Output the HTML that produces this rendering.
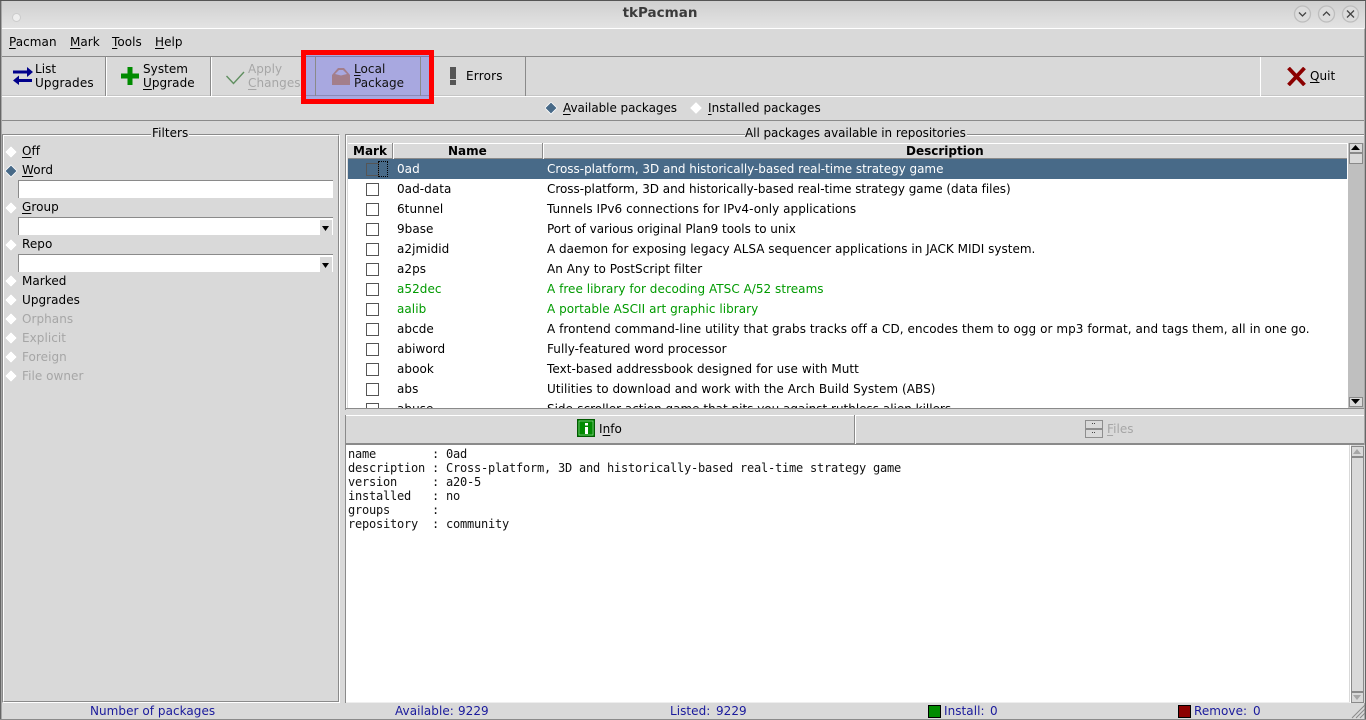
<!DOCTYPE html>
<html><head><meta charset="utf-8"><title>tkPacman</title>
<style>
html,body{margin:0;padding:0;background:#d9d9d9}
#w{position:relative;width:1366px;height:720px;overflow:hidden;background:#d9d9d9;font:12px/16px "DejaVu Sans",sans-serif;letter-spacing:.05px;color:#000}
#w div,#w span.t,#w svg{position:absolute}
.t{white-space:nowrap}
u{text-underline-offset:2px}
.n{position:absolute;left:397px;white-space:nowrap;color:#000}
.d{position:absolute;left:547px;white-space:nowrap;color:#000}
.g{color:#009a00!important}
.c{position:absolute;left:366px;width:11px;height:11px;border:1px solid #555;background:#fff}
.dis{color:#a6a6a6}
.bl{color:#1a1a9c}
.l{background:#8a8a8a}
.wl{background:#fff}
.h{font-weight:bold;letter-spacing:0}
</style></head><body><div id="w">
<!-- title bar -->
<div style="left:0;top:0;width:1366px;height:28px;background:linear-gradient(#cfcfcf,#e3e3e3);border-radius:6px 6px 0 0"></div>
<div style="left:0;top:0;width:1366px;height:1px;background:#555"></div>
<div style="left:12px;top:13px;width:7px;height:7px;border-radius:50%;background:#eee;border:1px solid #ccc"></div>
<span class="t" style="left:0;width:1320px;text-align:center;top:5px;font-weight:bold;font-size:13.5px;color:#3a3a3a;letter-spacing:0">tkPacman</span>
<svg style="left:1290px;top:2px" width="76" height="24" fill="none" stroke="#444" stroke-width="1.3">
<circle cx="12.500" cy="12" r="8" fill="#dcdcdc" stroke="#bdbdbd"/><path d="M9 10.500l3.500 3.500 3.500-3.500"/>
<circle cx="36.500" cy="12" r="8" fill="#dcdcdc" stroke="#bdbdbd"/><path d="M33 13.500l3.500-3.500 3.500 3.500"/>
<circle cx="60.500" cy="12" r="8" fill="#dcdcdc" stroke="#bdbdbd"/><path d="M57 8.500l7 7M64 8.500l-7 7"/></svg>
<div class="wl" style="left:2px;top:28px;width:1362px;height:1px"></div>
<!-- window borders -->
<div style="left:0;top:1px;width:1px;height:719px;background:#666"></div>
<div style="left:1px;top:1px;width:1px;height:719px;background:#a8a8a8"></div>
<div style="left:1365px;top:1px;width:1px;height:719px;background:#666"></div>
<div style="left:1364px;top:29px;width:1px;height:691px;background:#a8a8a8"></div>
<!-- menu -->
<span class="t" style="left:9px;top:34px"><u>P</u>acman</span>
<span class="t" style="left:70px;top:34px"><u>M</u>ark</span>
<span class="t" style="left:112px;top:34px"><u>T</u>ools</span>
<span class="t" style="left:155px;top:34px"><u>H</u>elp</span>
<div class="l" style="left:2px;top:56px;width:1362px;height:1px"></div>
<div class="wl" style="left:2px;top:96px;width:1362px;height:1px"></div>
<div class="l" style="left:2px;top:95px;width:1362px;height:1px;opacity:.25"></div>
<!-- toolbar separators -->
<div class="l" style="left:105px;top:57px;width:1px;height:39px"></div><div class="wl" style="left:106px;top:57px;width:1px;height:39px"></div>
<div class="l" style="left:210px;top:57px;width:1px;height:39px"></div><div class="wl" style="left:211px;top:57px;width:1px;height:39px"></div>
<div class="l" style="left:525px;top:57px;width:1px;height:39px"></div>
<div class="wl" style="left:1260px;top:57px;width:1px;height:39px"></div>
<!-- List upgrades -->
<svg style="left:12px;top:64px" width="21" height="23" fill="#00008b"><path d="M1 6.500h14V3l6 5-6 5V9.500H1zM20 15H7v-3.500L1 16.500 7 21v-3h13z"/></svg>
<span class="t" style="left:35px;top:61px">List</span><span class="t" style="left:35px;top:75px;letter-spacing:.15px">Upgrades</span>
<!-- System -->
<svg style="left:121px;top:67px" width="18" height="18" fill="#008b00"><path d="M6.500 0h5v6.500H18v5h-6.500V18h-5v-6.500H0v-5h6.500z"/></svg>
<span class="t" style="left:143px;top:61px">System</span><span class="t" style="left:143px;top:75px"><u>U</u>pgrade</span>
<!-- Apply -->
<svg style="left:226px;top:71px" width="19" height="14" fill="none" stroke="#5f8f5f" stroke-width="1.400"><path d="M0.500 5l7 7.500L18 1"/></svg>
<span class="t dis" style="left:248px;top:61px">Apply</span><span class="t dis" style="left:248px;top:75px"><u>C</u>hanges</span>
<!-- Local package highlight -->
<div style="left:301px;top:50px;width:133px;height:54px;background:#f00"></div>
<div style="left:306px;top:55px;width:123px;height:44px;background:#a8a8e0"></div>
<div style="left:306px;top:56px;width:123px;height:1px;background:#7c7ca8"></div>
<div style="left:306px;top:95px;width:123px;height:1px;background:#8a8ab8"></div>
<div class="l" style="left:315px;top:57px;width:1px;height:39px"></div>
<div class="l" style="left:420px;top:57px;width:1px;height:39px"></div>
<svg style="left:332px;top:68px" width="18" height="17"><path d="M0 7L6 0h6l6 7v10H0z" fill="#a37e8b"/><path d="M3 6L7 2h4l4 4-6 1.500z" fill="#a8a8e0"/></svg>
<span class="t" style="left:354px;top:61px;color:#111"><u>L</u>ocal</span><span class="t" style="left:354px;top:75px;color:#111">Package</span>
<!-- Errors -->
<svg style="left:450px;top:67px" width="7" height="18" fill="#555"><rect x="0" y="0" width="6" height="12"/><rect x="0" y="13" width="6" height="5"/></svg>
<span class="t" style="left:466px;top:68px;letter-spacing:.2px">Errors</span>
<!-- Quit -->
<svg style="left:1287px;top:67px" width="20" height="19" stroke="#8b0000" stroke-width="3.800" fill="none"><path d="M1.500 1l16 17M17.500 1l-16 17"/></svg>
<span class="t" style="left:1310px;top:68px"><u>Q</u>uit</span>
<!-- radio row -->
<svg style="left:545px;top:102px" width="13" height="13"><path d="M6 0l6 6-6 6-6-6z" fill="#486a88" stroke="#fff" stroke-width=".8"/></svg>
<span class="t" style="left:563px;top:100px;letter-spacing:-.06px"><u>A</u>vailable packages</span>
<svg style="left:690px;top:102px" width="13" height="13"><path d="M6 0l6 6-6 6-6-6z" fill="#fff" stroke="#ddd" stroke-width=".4"/></svg>
<span class="t" style="left:708px;top:100px"><u>I</u>nstalled packages</span>
<div class="l" style="left:2px;top:120px;width:1362px;height:1px"></div>
<!-- Filters frame -->
<div style="left:2px;top:134px;width:338px;height:569px;box-sizing:border-box;border:1px solid;border-color:#8a8a8a #fff #fff #8a8a8a"></div>
<div style="left:3px;top:135px;width:336px;height:567px;box-sizing:border-box;border:1px solid;border-color:#fff #8a8a8a #8a8a8a #fff"></div>
<span class="t" style="left:151px;top:125px;background:#d9d9d9;padding:0 1px">Filters</span>
<svg style="left:4px;top:145px" width="14" height="240" fill="#fff" stroke="#ccc" stroke-width=".4">
<path d="M7 1l6 6-6 6-6-6z"/><path d="M7 20l6 6-6 6-6-6z" fill="#486a88" stroke="#fff" stroke-width=".8"/><path d="M7 57l6 6-6 6-6-6z"/><path d="M7 94l6 6-6 6-6-6z"/><path d="M7 130l6 6-6 6-6-6z"/><path d="M7 149l6 6-6 6-6-6z"/><path d="M7 168l6 6-6 6-6-6z"/><path d="M7 187l6 6-6 6-6-6z"/><path d="M7 206l6 6-6 6-6-6z"/><path d="M7 225l6 6-6 6-6-6z"/></svg>
<span class="t" style="left:22px;top:143px"><u>O</u>ff</span>
<span class="t" style="left:22px;top:162px"><u>W</u>ord</span>
<div style="left:18px;top:180px;width:314px;height:17px;background:#fff;border-top:1px solid #8a8a8a;border-left:1px solid #8a8a8a;box-sizing:content-box"></div>
<span class="t" style="left:22px;top:199px"><u>G</u>roup</span>
<div style="left:18px;top:217px;width:314px;height:17px;background:#fff;border-top:1px solid #8a8a8a;border-left:1px solid #8a8a8a"></div>
<div style="left:320px;top:220px;width:12px;height:15px;background:#d9d9d9"></div>
<svg style="left:322px;top:226px" width="8" height="6"><path d="M0 0h7L3.500 5z"/></svg>
<span class="t" style="left:22px;top:236px">Repo</span>
<div style="left:18px;top:254px;width:314px;height:17px;background:#fff;border-top:1px solid #8a8a8a;border-left:1px solid #8a8a8a"></div>
<div style="left:320px;top:257px;width:12px;height:15px;background:#d9d9d9"></div>
<svg style="left:322px;top:263px" width="8" height="6"><path d="M0 0h7L3.500 5z"/></svg>
<span class="t" style="left:22px;top:273px">Marked</span>
<span class="t" style="left:22px;top:292px">Upgrades</span>
<span class="t dis" style="left:22px;top:311px">Orphans</span>
<span class="t dis" style="left:22px;top:330px">Explicit</span>
<span class="t dis" style="left:22px;top:349px">Foreign</span>
<span class="t dis" style="left:22px;top:368px">File owner</span>
<!-- Right frame -->
<div style="left:345px;top:134px;width:1019px;height:1px;background:#8a8a8a"></div>
<div style="left:345px;top:134px;width:1px;height:276px;background:#8a8a8a"></div>
<div class="wl" style="left:346px;top:135px;width:1018px;height:1px"></div>
<div class="wl" style="left:346px;top:135px;width:1px;height:274px"></div>
<span class="t" style="left:745px;top:125px;background:#d9d9d9;padding-right:1px;letter-spacing:-.05px">All packages available in repositories</span>
<!-- table -->
<div style="left:348px;top:143px;width:999px;height:16px;background:#d9d9d9"></div>
<div class="l" style="left:348px;top:158px;width:999px;height:1px"></div>
<div class="wl" style="left:348px;top:143px;width:999px;height:1px"></div>
<div class="l" style="left:392px;top:143px;width:1px;height:16px"></div><div class="wl" style="left:393px;top:143px;width:1px;height:16px"></div>
<div class="l" style="left:542px;top:143px;width:1px;height:16px"></div><div class="wl" style="left:543px;top:143px;width:1px;height:16px"></div>
<span class="t h" style="left:353px;top:143px">Mark</span>
<span class="t h" style="left:448px;top:143px">Name</span>
<span class="t h" style="left:906px;top:143px">Description</span>
<!-- rows -->
<div style="left:348px;top:159px;width:999px;height:249px;background:#fff;overflow:hidden"></div>
<div style="left:348px;top:159px;width:999px;height:20px;background:#486a88"></div>
<div style="left:0;top:0;width:1366px;height:408px;overflow:hidden;background:none">
<span class="c" style="top:163px;background:#486a88"></span><span style="position:absolute;left:378px;top:161px;width:8px;height:14px;border:1px dotted #000"></span>
<span class="n" style="top:161px;color:#fff">0ad</span><span class="d" style="top:161px;color:#fff;letter-spacing:-.027px">Cross-platform, 3D and historically-based real-time strategy game</span>
<span class="c" style="top:183px"></span><span class="n" style="top:181px">0ad-data</span><span class="d" style="top:181px;letter-spacing:-.04px">Cross-platform, 3D and historically-based real-time strategy game (data files)</span>
<span class="c" style="top:203px"></span><span class="n" style="top:201px">6tunnel</span><span class="d" style="top:201px">Tunnels IPv6 connections for IPv4-only applications</span>
<span class="c" style="top:223px"></span><span class="n" style="top:221px">9base</span><span class="d" style="top:221px;letter-spacing:-.043px">Port of various original Plan9 tools to unix</span>
<span class="c" style="top:243px"></span><span class="n" style="top:241px">a2jmidid</span><span class="d" style="top:241px;letter-spacing:.01px">A daemon for exposing legacy ALSA sequencer applications in JACK MIDI system.</span>
<span class="c" style="top:263px"></span><span class="n" style="top:261px">a2ps</span><span class="d" style="top:261px">An Any to PostScript filter</span>
<span class="c" style="top:283px"></span><span class="n g" style="top:281px">a52dec</span><span class="d g" style="top:281px;letter-spacing:.03px">A free library for decoding ATSC A/52 streams</span>
<span class="c" style="top:303px"></span><span class="n g" style="top:301px">aalib</span><span class="d g" style="top:301px">A portable ASCII art graphic library</span>
<span class="c" style="top:323px"></span><span class="n" style="top:321px">abcde</span><span class="d" style="top:321px;letter-spacing:.058px">A frontend command-line utility that grabs tracks off a CD, encodes them to ogg or mp3 format, and tags them, all in one go.</span>
<span class="c" style="top:343px"></span><span class="n" style="top:341px">abiword</span><span class="d" style="top:341px">Fully-featured word processor</span>
<span class="c" style="top:363px"></span><span class="n" style="top:361px">abook</span><span class="d" style="top:361px">Text-based addressbook designed for use with Mutt</span>
<span class="c" style="top:383px"></span><span class="n" style="top:381px">abs</span><span class="d" style="top:381px">Utilities to download and work with the Arch Build System (ABS)</span>
<span class="c" style="top:403px"></span><span class="n" style="top:401px">abuse</span><span class="d" style="top:401px;letter-spacing:-.007px">Side-scroller action game that pits you against ruthless alien killers</span>
</div>
<!-- scrollbar top -->
<div style="left:1348px;top:143px;width:16px;height:265px;background:#bfbfbf"></div>
<div style="left:1349px;top:143px;width:14px;height:10px;background:#d9d9d9;border:1px solid #8a8a8a;box-sizing:border-box"></div>
<svg style="left:1351px;top:145px" width="10" height="6"><path d="M0 5h9L4.500 0z"/></svg>
<div style="left:1349px;top:153px;width:14px;height:11px;background:#d9d9d9;border:1px solid #8a8a8a;box-sizing:border-box"></div>
<div style="left:1349px;top:397px;width:14px;height:10px;background:#d9d9d9;border:1px solid #8a8a8a;box-sizing:border-box"></div>
<svg style="left:1351px;top:399px" width="10" height="6"><path d="M0 0h9L4.500 5z"/></svg>
<div class="l" style="left:346px;top:408px;width:1018px;height:1px"></div>
<div class="wl" style="left:1347px;top:143px;width:1px;height:265px"></div>
<!-- Info tabs -->
<div class="wl" style="left:346px;top:415px;width:1018px;height:1px"></div>
<div class="l" style="left:346px;top:443px;width:1018px;height:2px"></div>
<div class="l" style="left:345px;top:415px;width:1px;height:288px"></div>
<div class="l" style="left:854px;top:415px;width:1px;height:29px"></div><div class="wl" style="left:855px;top:415px;width:1px;height:29px"></div>
<svg style="left:577px;top:419px" width="19" height="19"><rect x="0.500" y="0.500" width="17" height="17" fill="#008b00" stroke="#005a00"/><rect x="2" y="2" width="14" height="14" fill="#008b00" stroke="#d0e8d0" stroke-width=".5"/><rect x="8" y="4" width="3" height="2.500" fill="#fff"/><rect x="8" y="8" width="3" height="7" fill="#fff"/></svg>
<span class="t" style="left:599px;top:421px">I<u>n</u>fo</span>
<svg style="left:1085px;top:420px" width="18" height="18" fill="none" stroke="#444" stroke-dasharray="1 1" shape-rendering="crispEdges"><rect x=".5" y=".5" width="17" height="8"/><rect x=".5" y="9.500" width="17" height="8"/><path d="M7 3.500h4M7 12.500h4"/></svg>
<span class="t dis" style="left:1107px;top:421px"><u>F</u>iles</span>
<!-- Info text -->
<div style="left:346px;top:445px;width:1003px;height:258px;background:#fff"></div>
<div style="left:348px;top:447px;font:12px/14px 'DejaVu Sans Mono',monospace;letter-spacing:-.225px;white-space:pre;color:#111">name        : 0ad
description : Cross-platform, 3D and historically-based real-time strategy game
version     : a20-5
installed   : no
groups      :
repository  : community</div>
<div style="left:1350px;top:445px;width:14px;height:258px;background:#d9d9d9;border-left:1px solid #fff"></div>
<div style="left:1351px;top:446px;width:13px;height:11px;border:1px solid #8a8a8a;box-sizing:border-box"></div>
<svg style="left:1353px;top:449px" width="9" height="6"><path d="M0 5h8L4 0z" fill="#a6a6a6"/></svg>
<div style="left:1351px;top:457px;width:13px;height:235px;border:1px solid #8a8a8a;box-sizing:border-box"></div>
<div style="left:1351px;top:692px;width:13px;height:11px;border:1px solid #8a8a8a;box-sizing:border-box"></div>
<svg style="left:1353px;top:695px" width="9" height="6"><path d="M0 0h8L4 5z" fill="#a6a6a6"/></svg>
<!-- Status bar -->
<div style="left:346px;top:702px;width:1004px;height:1px;background:#eee"></div>
<div class="l" style="left:0;top:719px;width:1366px;height:1px"></div>
<span class="t bl" style="left:90px;top:703px">Number of packages</span>
<span class="t bl" style="left:395px;top:703px">Available:</span><span class="t bl" style="left:458px;top:703px">9229</span>
<span class="t bl" style="left:670px;top:703px">Listed:</span><span class="t bl" style="left:716px;top:703px">9229</span>
<div style="left:928px;top:705px;width:11px;height:11px;background:#008b00;border:1px solid #000"></div>
<span class="t bl" style="left:944px;top:703px">Install:</span><span class="t bl" style="left:990px;top:703px">0</span>
<div style="left:1178px;top:705px;width:11px;height:11px;background:#8b0000;border:1px solid #000"></div>
<span class="t bl" style="left:1194px;top:703px">Remove:</span><span class="t bl" style="left:1253px;top:703px">0</span>
<svg style="left:1351px;top:704px" width="15" height="15" stroke="#8a8a8a"><path d="M14 1L1 14M14 5L5 14M14 9L9 14"/></svg>
</div></body></html>
